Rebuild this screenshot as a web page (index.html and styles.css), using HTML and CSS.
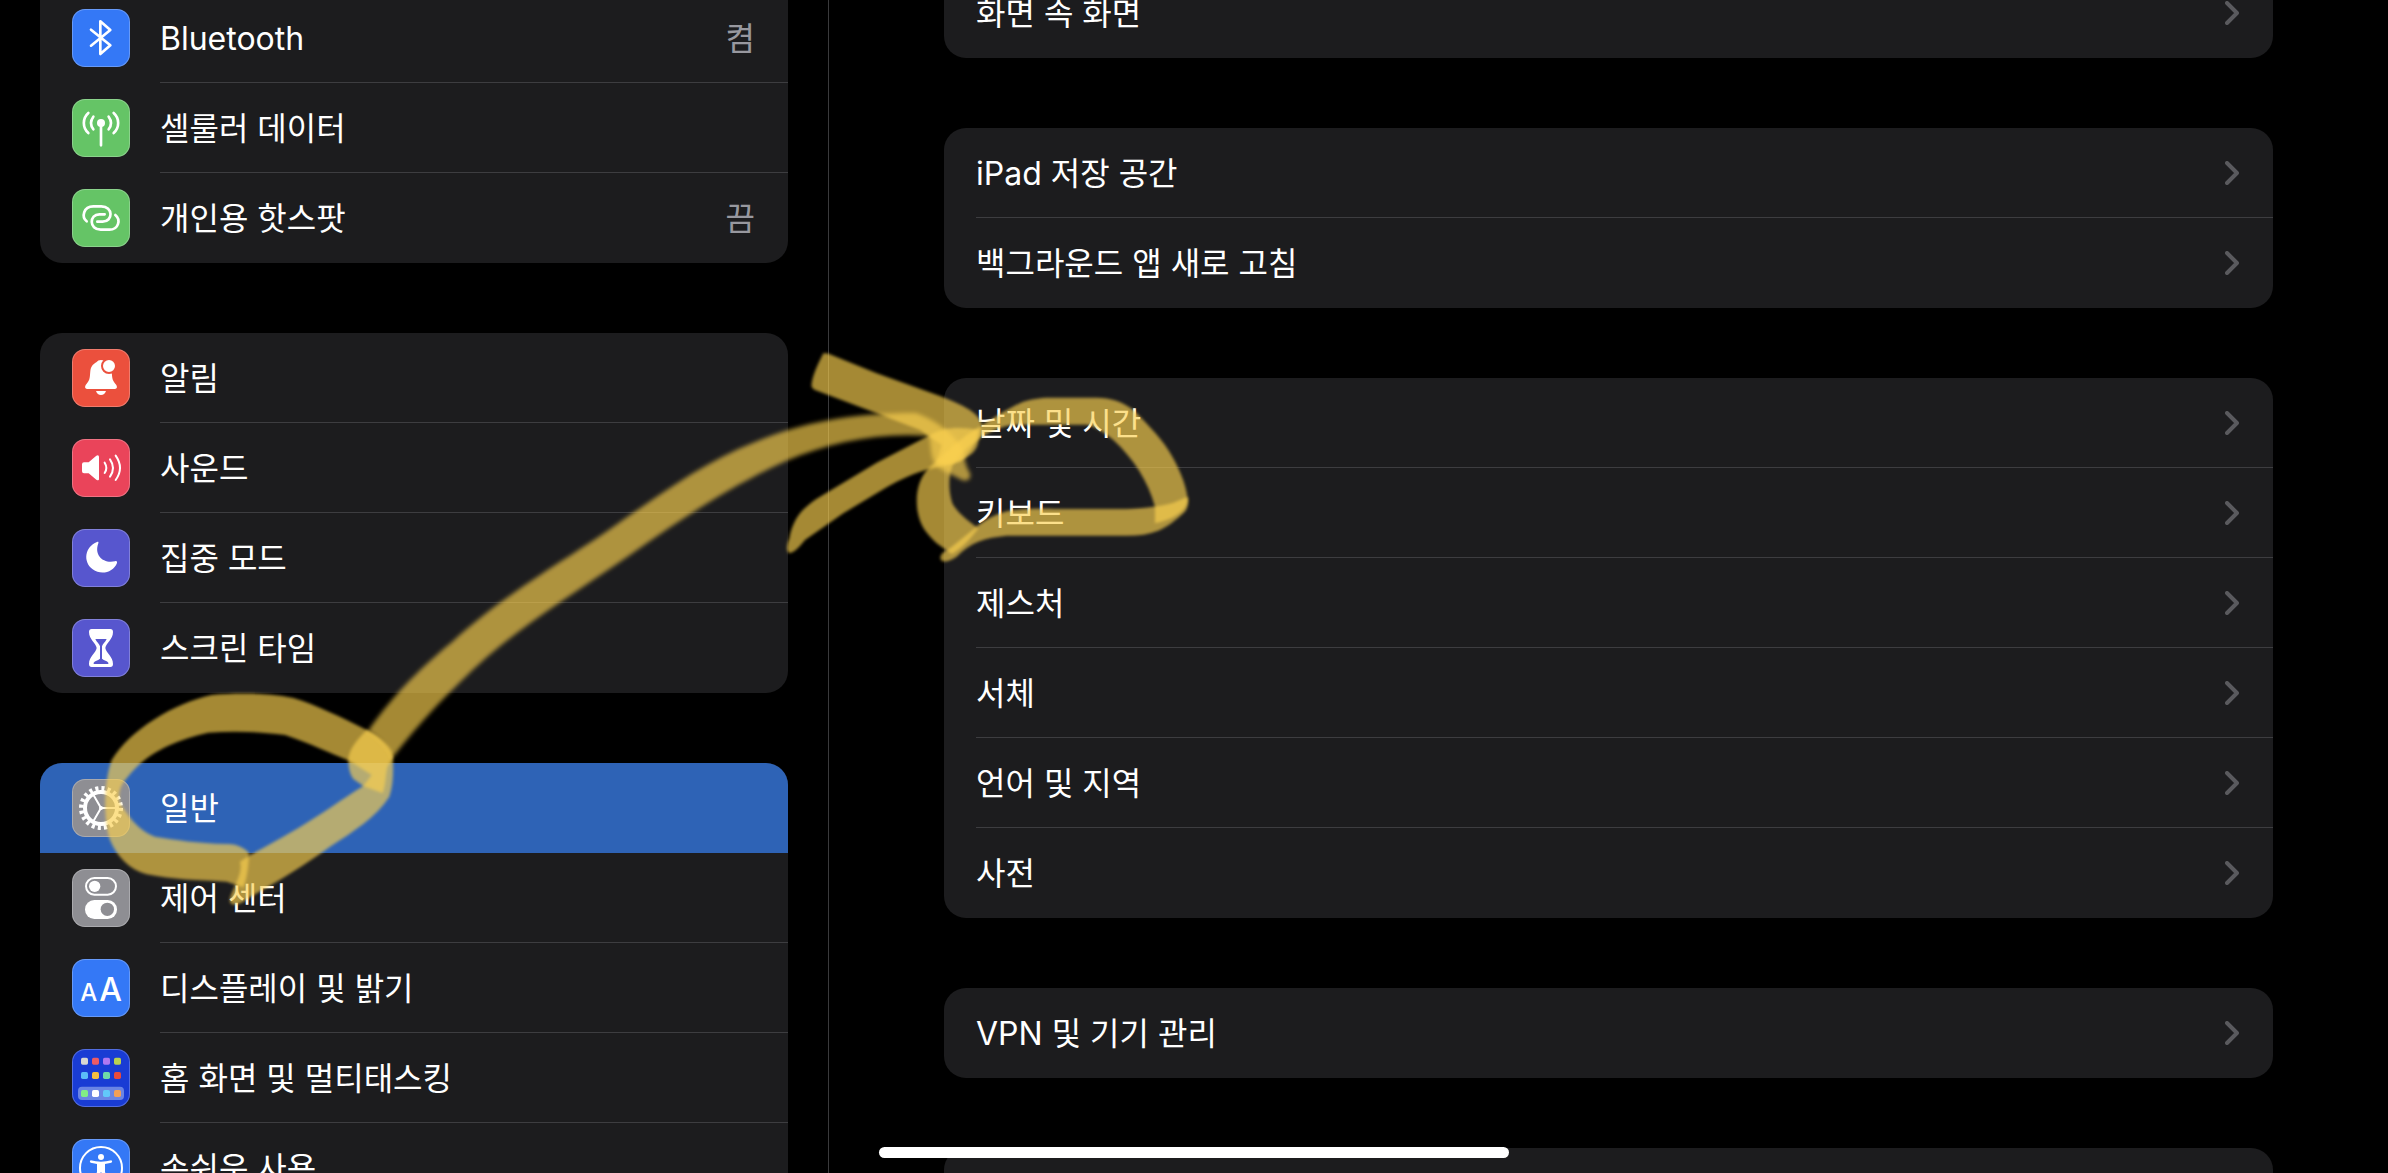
FILE: index.html
```html
<!DOCTYPE html>
<html lang="ko">
<head>
<meta charset="utf-8">
<title>설정</title>
<link rel="stylesheet" href="styles.css">
</head>
<body>
<svg class="defs" aria-hidden="true">
  <symbol id="chevron" viewBox="0 0 14 24"><path d="M2 2 L12 12 L2 22" fill="none" stroke="currentColor" stroke-width="4" stroke-linecap="round" stroke-linejoin="round"/></symbol>
</svg>
<div class="app">
  <nav class="sidebar" aria-label="설정">
    <ul class="card card-cut-top">
      <li class="row"><a class="item" href="#">
        <span class="icon blue"><svg viewBox="0 0 174 174"><path class="line" d="M57 62 L115 109 L85 135 V37 L115 63 L57 110"/></svg></span>
        <span class="text">Bluetooth</span><span class="value">켬</span></a></li>
      <li class="row"><a class="item" href="#">
        <span class="icon green"><svg viewBox="0 0 174 174"><circle class="solid" cx="87" cy="72" r="12"/><path class="line" d="M87 72 V139 M64 53 Q50 72 64 91 M110 53 Q124 72 110 91 M49 42 C31 58 31 86 49 102 M125 42 C143 58 143 86 125 102"/></svg></span>
        <span class="text">셀룰러 데이터</span></a></li>
      <li class="row"><a class="item" href="#">
        <span class="icon green"><svg viewBox="0 0 174 174"><path class="line" d="M44 97 C28 84 34 52 64 52 H88 C124 52 124 98 92 98 H76 M130 78 C147 92 140 122 112 122 H86 C50 122 52 76 82 76 H98"/></svg></span>
        <span class="text">개인용 핫스팟</span><span class="value">끔</span></a></li>
    </ul>

    <ul class="card">
      <li class="row"><a class="item" href="#">
        <span class="icon red"><svg viewBox="0 0 174 174"><path class="solid" d="M45 120 Q36 118 41 108 C56 92 53 82 55 66 C57 50 66 44 73 40 Q78 33 87 33 Q96 33 101 40 C108 44 117 50 119 66 C121 82 118 92 133 108 Q138 118 129 120 Z M72 126 H102 Q98 138 87 138 Q76 138 72 126 Z"/><circle cx="111" cy="51" r="21" fill="#fff" stroke="#eb503d" stroke-width="6"/></svg></span>
        <span class="text">알림</span></a></li>
      <li class="row"><a class="item" href="#">
        <span class="icon pink"><svg viewBox="0 0 174 174"><path class="solid" d="M30 76 Q30 70 36 70 H50 L73 50 Q81 46 81 54 V120 Q81 127 73 122 L50 103 H36 Q30 103 30 97 Z"/><path class="line thin" d="M98 71 Q108 87 98 102 M114 61 Q132 87 114 113 M131 50 Q157 87 131 123"/></svg></span>
        <span class="text">사운드</span></a></li>
      <li class="row"><a class="item" href="#">
        <span class="icon indigo"><svg viewBox="0 0 174 174"><path class="solid" d="M75 39 C38 54 32 98 62 121 C88 140 124 130 135 102 C136 97 133 95 129 97 C95 105 65 80 79 43 C80 39 79 37 75 39 Z"/></svg></span>
        <span class="text">집중 모드</span></a></li>
      <li class="row"><a class="item" href="#">
        <span class="icon indigo"><svg viewBox="0 0 174 174"><path class="solid" d="M59 30 H115 Q123 30 123 39 C123 62 102 72 100 87 C102 102 123 112 123 135 Q123 144 115 144 H59 Q51 144 51 135 C51 112 72 102 74 87 C72 72 51 62 51 39 Q51 30 59 30 Z"/><path fill="#5756ce" d="M70 60 H104 C100 69 91 76 90 82 V119 C97 125 105 125 109 131 V135 H65 V131 C69 125 77 125 84 119 V82 C83 76 74 69 70 60 Z"/></svg></span>
        <span class="text">스크린 타임</span></a></li>
    </ul>

    <ul class="card">
      <li class="row selected"><a class="item" href="#" aria-current="page">
        <span class="icon gray"><svg viewBox="0 0 174 174"><circle cx="87" cy="87" r="59" fill="none" stroke="#fff" stroke-width="14" pathLength="40" stroke-dasharray="1 1"/><circle cx="87" cy="87" r="48" fill="none" stroke="#fff" stroke-width="12"/><circle class="solid" cx="87" cy="87" r="6"/><path class="line thin" d="M87 87 H134 M87 87 L64 47 M87 87 L64 127"/></svg></span>
        <span class="text">일반</span></a></li>
      <li class="row"><a class="item" href="#">
        <span class="icon gray"><svg viewBox="0 0 174 174"><rect class="line thin" x="42" y="27" width="90" height="50" rx="25"/><circle class="solid" cx="68" cy="52" r="17"/><rect class="solid" x="39" y="93" width="96" height="57" rx="28"/><circle cx="106" cy="121" r="20" fill="#8e8e93"/></svg></span>
        <span class="text">제어 센터</span></a></li>
      <li class="row"><a class="item" href="#">
        <span class="icon blue letters" aria-hidden="true"><span class="small-a">A</span><span class="big-a">A</span></span>
        <span class="text">디스플레이 및 밝기</span></a></li>
      <li class="row"><a class="item" href="#">
        <span class="icon royal"><svg viewBox="0 0 174 174"><rect x="18" y="113" width="138" height="40" rx="12" fill="#6a85e4"/>
          <rect x="27" y="26" width="21" height="21" rx="5" fill="#d8d8d2"/><rect x="60" y="26" width="21" height="21" rx="5" fill="#ec5b64"/><rect x="93" y="26" width="21" height="21" rx="5" fill="#b078f2"/><rect x="126" y="26" width="21" height="21" rx="5" fill="#b8d152"/>
          <rect x="27" y="69" width="21" height="21" rx="5" fill="#5bbcf8"/><rect x="60" y="69" width="21" height="21" rx="5" fill="#f5bf42"/><rect x="93" y="69" width="21" height="21" rx="5" fill="#6fd8a8"/><rect x="126" y="69" width="21" height="21" rx="5" fill="#e94b3c"/>
          <rect x="27" y="123" width="21" height="21" rx="5" fill="#82ee86"/><rect x="60" y="123" width="21" height="21" rx="5" fill="#fff"/><rect x="93" y="123" width="21" height="21" rx="5" fill="#62c8fa"/><rect x="126" y="123" width="21" height="21" rx="5" fill="#f2a057"/></svg></span>
        <span class="text">홈 화면 및 멀티태스킹</span></a></li>
      <li class="row"><a class="item" href="#">
        <span class="icon blue"><svg viewBox="0 0 174 174"><circle class="line thin" cx="87" cy="87" r="63"/><circle class="solid" cx="87" cy="54" r="9"/><path class="solid" d="M56 64 Q87 72 118 64 Q123 68 118 71 L99 75 V98 L107 127 Q103 132 99 128 L88 100 H86 L75 128 Q71 132 67 127 L75 98 V75 L56 71 Q51 68 56 64 Z"/></svg></span>
        <span class="text">손쉬운 사용</span></a></li>
    </ul>
  </nav>

  <main class="detail">
    <ul class="card card-cut-top">
      <li class="row"><a class="item" href="#"><span class="text">화면 속 화면</span><svg class="chevron"><use href="#chevron"/></svg></a></li>
    </ul>
    <ul class="card">
      <li class="row"><a class="item" href="#"><span class="text">iPad 저장 공간</span><svg class="chevron"><use href="#chevron"/></svg></a></li>
      <li class="row"><a class="item" href="#"><span class="text">백그라운드 앱 새로 고침</span><svg class="chevron"><use href="#chevron"/></svg></a></li>
    </ul>
    <ul class="card">
      <li class="row"><a class="item" href="#"><span class="text">날짜 및 시간</span><svg class="chevron"><use href="#chevron"/></svg></a></li>
      <li class="row"><a class="item" href="#"><span class="text">키보드</span><svg class="chevron"><use href="#chevron"/></svg></a></li>
      <li class="row"><a class="item" href="#"><span class="text">제스처</span><svg class="chevron"><use href="#chevron"/></svg></a></li>
      <li class="row"><a class="item" href="#"><span class="text">서체</span><svg class="chevron"><use href="#chevron"/></svg></a></li>
      <li class="row"><a class="item" href="#"><span class="text">언어 및 지역</span><svg class="chevron"><use href="#chevron"/></svg></a></li>
      <li class="row"><a class="item" href="#"><span class="text">사전</span><svg class="chevron"><use href="#chevron"/></svg></a></li>
    </ul>
    <ul class="card">
      <li class="row"><a class="item" href="#"><span class="text">VPN 및 기기 관리</span><svg class="chevron"><use href="#chevron"/></svg></a></li>
    </ul>
    <ul class="card">
      <li class="row"></li>
    </ul>
  </main>
</div>

<!-- Highlighter marks: circle, arrow, circle -->
<svg class="marker" viewBox="0 0 2388 1173" aria-hidden="true">
  <defs><filter id="soft" x="-5%" y="-5%" width="110%" height="110%"><feGaussianBlur stdDeviation="2"/></filter><filter id="soft-large" x="-5%" y="-5%" width="110%" height="110%"><feGaussianBlur stdDeviation="5"/></filter></defs>
  <g class="large" transform="translate(30 680) scale(.33333)">
    <path class="ink" d="M1090 230 C1070 190 1040 165 1010 150 C930 110 860 75 790 54 C710 38 620 38 545 45 C430 70 300 150 245 240 C220 310 220 420 240 480 C260 530 300 570 350 583 C430 600 500 600 590 605 L640 622 C650 600 656 560 657 518 C640 500 610 490 590 492 C500 490 440 480 375 470 C320 450 290 400 270 370 C262 340 272 315 290 295 C350 215 440 180 535 158 C610 152 690 155 765 165 C840 190 900 220 958 242 L1025 285 L1000 318 L1058 340 C1068 310 1066 290 1072 262 Z"/>
    <path class="ink" d="M600 655 C596 682 625 674 640 665 C700 625 760 600 900 500 C970 455 1040 410 1078 350 C1092 310 1090 260 1088 215 C1070 185 1040 165 1010 150 C980 180 960 205 955 235 C955 260 958 280 970 297 L1000 318 C900 380 850 425 660 525 L630 545 C640 580 610 620 600 655 Z"/>
  </g>
  <path class="ink" d="M368 731 C395 692 424 665 452 642 C498 600 545 572 594 540 C650 502 700 463 755 442 C800 423 850 413 916 413 C935 420 948 430 956 440 C966 448 962 460 970 473 C972 482 964 482 958 478 C946 472 936 468 933 460 C930 450 931 444 929 436 C880 432 830 442 786 461 C730 486 680 520 630 555 C575 593 530 620 487 657 C450 690 420 722 393 757 C386 745 378 737 368 731 Z"/>
  <g class="large" transform="translate(760 330) scale(.33333)">
    <path class="ink" d="M190 70 C175 100 160 130 155 160 Q152 175 165 180 L350 250 L480 300 L545 345 L530 395 Q560 410 575 400 C620 385 650 370 655 335 L665 285 Q665 265 630 240 C600 222 570 210 540 198 L350 130 L215 75 Q205 68 190 70 Z"/>
    <path class="ink" d="M85 668 Q75 655 88 625 C95 590 105 570 120 550 C140 525 170 505 200 488 L350 398 L505 318 C550 290 600 290 655 300 C650 340 630 370 600 395 L520 415 C460 428 420 450 380 472 L250 550 L135 630 Q100 675 85 668 Z"/>
    <path class="ink" d="M1185 580 C1235 570 1280 545 1283 510 C1280 460 1250 400 1225 360 C1200 320 1150 270 1120 240 C1090 215 1050 203 1010 203 H870 C840 203 810 208 790 215 C740 235 670 285 620 315 C580 345 540 385 505 415 C475 450 466 490 472 540 C480 590 500 610 530 640 L575 672 C600 660 630 630 655 595 C620 570 590 545 577 520 C565 480 565 440 578 405 C600 370 640 335 680 312 C710 295 740 285 770 284 H980 C1010 290 1035 310 1060 330 C1120 385 1165 455 1185 530 Z"/>
    <path class="ink" d="M545 692 Q530 675 570 655 L650 590 C680 565 730 540 770 540 C820 535 850 537 880 537 H1080 C1130 537 1200 530 1240 518 L1283 500 Q1288 535 1270 550 C1250 568 1225 590 1195 602 C1165 614 1130 618 1090 617 H740 C710 620 680 625 655 635 C630 645 610 660 590 680 Q560 700 545 692 Z"/>
  </g>
</svg>
<div class="home-bar"></div>
</body>
</html>
```
FILE: styles.css
```css
* { box-sizing: border-box; }

body {
  margin: 0;
  height: 100vh;
  overflow: hidden;
  position: relative;
  background: #000;
  color: #fff;
  font-family: "Inter", "Noto Sans CJK KR", sans-serif;
  font-size: 32px;
  line-height: 40px;
}

.defs { display: none; }

.app {
  display: flex;
  height: 100vh;
  overflow: hidden;
}

.sidebar,
.detail {
  display: flex;
  flex-direction: column;
  gap: 70px;
}

.sidebar {
  flex: 0 0 829px;
  padding: 0 40px;
  border-right: 1px solid #3a3a3c;
}

.detail {
  flex: 1;
  padding: 0 115px;
}

.sidebar .card-cut-top { margin-top: -7px; }
.detail .card-cut-top { margin-top: -32px; }

.card {
  flex: none;
  list-style: none;
  margin-bottom: 0;
  margin-top: 0;
  padding: 0;
  border-radius: 22px;
  background: #1c1c1e;
  overflow: hidden;
}

.card-cut-top {
  border-top-left-radius: 0;
  border-top-right-radius: 0;
}

.row {
  height: 90px;
  padding-left: 32px;
}

.item {
  display: flex;
  align-items: center;
  height: 100%;
  color: inherit;
  text-decoration: none;
}

.detail .item,
.sidebar .text,
.sidebar .value {
  border-bottom: 1px solid #3d3d40;
}

.text,
.value {
  display: flex;
  align-items: center;
  height: 100%;
  padding-top: 3px;
}

.row:last-child .item,
.row:last-child .text,
.row:last-child .value,
.selected .text {
  border-bottom-color: transparent;
}

.text { flex: 1; }

.value {
  padding-right: 33px;
  color: #98989f;
}

.selected { background: #2e63b6; }

.icon {
  flex: none;
  width: 58px;
  height: 58px;
  margin-right: 30px;
  border-radius: 13px;
  box-shadow: inset 0 0 0 1px rgba(255, 255, 255, .25);
}

.icon svg {
  display: block;
  width: 58px;
  height: 58px;
}

.solid { fill: #fff; }

.line {
  fill: none;
  stroke: #fff;
  stroke-width: 8;
  stroke-linecap: round;
  stroke-linejoin: round;
}

.thin { stroke-width: 6; }

.blue { background: #3478f6; }
.green { background: #65c466; }
.red { background: #eb503d; }
.pink { background: #ea445a; }
.indigo { background: #5756ce; }
.gray { background: #8e8e93; }
.royal { background: #193cd4; }

.letters {
  display: flex;
  justify-content: center;
  align-items: baseline;
  gap: 2px;
  line-height: 62px;
  font-weight: 500;
}

.small-a { font-size: 24px; }
.big-a { font-size: 32px; }

.chevron {
  width: 14px;
  height: 24px;
  margin-right: 34px;
  color: #5a5a5e;
}

.marker {
  position: absolute;
  top: 0;
  left: 0;
  width: 2388px;
  height: 1173px;
  pointer-events: none;
}

.ink {
  fill: #fad04e;
  fill-opacity: .66;
  filter: url(#soft);
}

.large .ink { filter: url(#soft-large); }

.home-bar {
  position: absolute;
  bottom: 15px;
  left: 50%;
  width: 630px;
  height: 11px;
  margin-left: -315px;
  border-radius: 6px;
  background: #fff;
}
```
